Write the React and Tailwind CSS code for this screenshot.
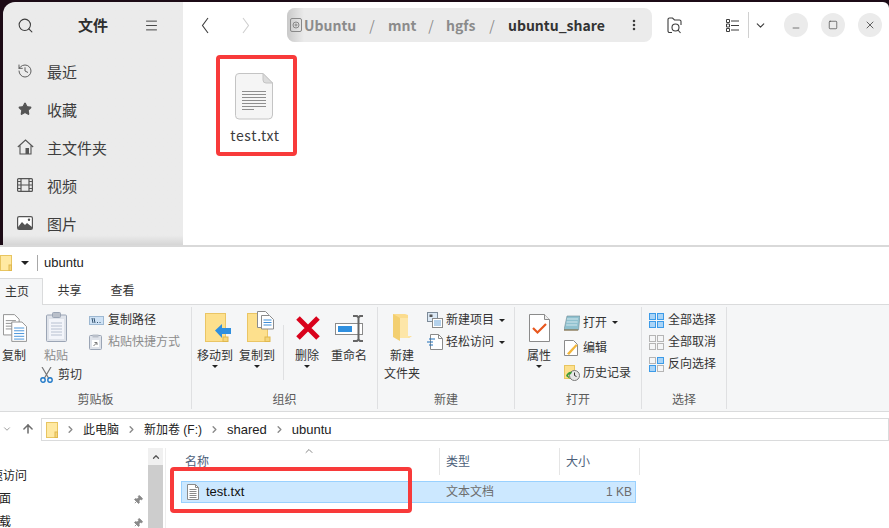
import React from 'react';
import {
  ChevronDown,
  ChevronRight,
  ChevronUp,
  EllipsisVertical,
  History,
  Menu,
  Minus,
  Pin,
  Search,
  Square,
  Star,
  X,
  ArrowUp,
} from 'lucide-react';

const CJK = 'font-["Noto_Sans_CJK_SC","Noto_Sans",sans-serif]';

function BackIcon({ flip, color }) {
  return (
    <svg width="8" height="17" viewBox="0 0 8 17" fill="none" stroke={color} strokeWidth="1.1" className={flip ? 'rotate-180' : ''}>
      <path d="M7 1L1.500 8.500 7 16" />
    </svg>
  );
}

function FolderFindIcon() {
  return (
    <svg width="15" height="17" viewBox="0 0 15 17" fill="none" stroke="#3d3d3d" strokeWidth="1.1">
      <path d="M5 15.500H2.500A1.500 1.500 0 0 1 1 14V2.500A1.500 1.500 0 0 1 2.500 1h3l2 2h5A1.500 1.500 0 0 1 14 4.500V8" />
      <circle cx="8.500" cy="10.500" r="3.500" />
      <path d="M11 13l2.500 3" />
    </svg>
  );
}

function HomeIcon() {
  return (
    <svg width="17" height="16" viewBox="0 0 17 16" fill="none" stroke="#555" strokeWidth="1.1">
      <path d="M.800 8L8.500 1l7.700 7M3 6.500v8.500h11V6.500" />
      <rect x="8.500" y="9" width="3.500" height="6" fill="#555" stroke="none" />
    </svg>
  );
}

function FilmIcon() {
  return (
    <svg width="16" height="14" viewBox="0 0 16 14" fill="none" stroke="#555" strokeWidth="1.2">
      <rect x="0.6" y="0.6" width="14.8" height="12.8" rx="1" />
      <path d="M4 .6v12.8M12 .6v12.8M4 7h8M.6 3.5H4M.6 7H4M.6 10.5H4M12 3.5h3.4M12 7h3.4M12 10.5h3.4" />
    </svg>
  );
}

function PictureIcon() {
  return (
    <svg width="16" height="14" viewBox="0 0 16 14">
      <rect x="0.6" y="0.6" width="14.8" height="12.8" rx="1.5" fill="#fff" stroke="#555" strokeWidth="1.2" />
      <path d="M1 11l4-5 3 3 2-2 5 4v2H1z" fill="#555" />
      <circle cx="12" cy="3.8" r="1.2" fill="#555" />
    </svg>
  );
}

function TextFileLarge() {
  return (
    <svg width="38" height="47" viewBox="0 0 38 47">
      <path d="M4 .5h24l9.500 9.500v32a4 4 0 0 1-4 4H4a3.500 3.500 0 0 1-3.500-3.500V4A3.500 3.500 0 0 1 4 .5z" fill="#f5f5f5" stroke="#c4c4c4" />
      <path d="M28 .5V7a3 3 0 0 0 3 3h6.500z" fill="#dcdcdc" stroke="#c4c4c4" />
      <path d="M7 18.500h24M7 21.500h24M7 24.500h24M7 27.500h24M7 30.500h24M7 33.500h24M7 36.500h12" stroke="#8e8e8e" />
    </svg>
  );
}

function CameraFolder() {
  return (
    <svg width="12" height="18" viewBox="0 0 12 18" fill="none" stroke="#888">
      <rect x="0.5" y="2.500" width="11" height="13" rx="1.500" />
      <circle cx="6" cy="9" r="3" />
      <circle cx="6" cy="9" r="1" />
    </svg>
  );
}

function ListViewIcon() {
  return (
    <svg width="13" height="13" viewBox="0 0 13 13" fill="none" stroke="#3d3d3d">
      <path d="M.5.500h3v3h-3zM.5 5h3v3h-3zM.5 9.500h3v3h-3zM5 2h8M5 6.500h8M5 11h8" />
    </svg>
  );
}

function WinFolder() {
  return (
    <svg width="12" height="16" viewBox="0 0 12 16">
      <rect x="0.5" y="0.500" width="11" height="15" fill="#ffe9a2" stroke="#e8c560" />
      <rect x="9" y="10" width="2.500" height="5.500" fill="#f5d67c" stroke="#e0b84e" />
    </svg>
  );
}

function RowFileIcon() {
  return (
    <svg width="12" height="16" viewBox="0 0 12 16" fill="none" stroke="#8a8a8a">
      <path d="M.500.500h8l3 3v12h-11z" fill="#fff" />
      <path d="M8.500.500v3h3M2.500 5.500h7M2.500 7.500h7M2.500 9.500h7M2.500 11.500h7M2.500 13.500h7" />
    </svg>
  );
}

function CopyIcon() {
  return (
    <svg width="24" height="28" viewBox="0 0 26 30" className="ml-[2px]">
      <path d="M.5.500h12l5 5v17H.5z" fill="#fff" stroke="#8b8b8b" />
      <path d="M3 7h11M3 10h11M3 13h11M3 16h11" stroke="#8b8b8b" />
      <path d="M9.500 8.500h11l5 5v16h-16z" fill="#fff" stroke="#8b8b8b" />
      <path d="M12 15h11M12 18h11M12 21h11M12 24h11M12 27h11" stroke="#3f8fd8" />
    </svg>
  );
}

function PasteIcon() {
  return (
    <svg width="21" height="30" viewBox="0 0 21 30">
      <rect x="0.500" y="3" width="20" height="26.500" rx="1" fill="#dfe3ea" stroke="#9ba5b5" />
      <rect x="3" y="7" width="15" height="20" fill="#f3f5fa" />
      <path d="M5 11h11M5 14h11M5 17h11M5 20h11M5 23h11" stroke="#b7c0d0" />
      <rect x="6.500" y="0.500" width="8" height="5" rx="1" fill="#b9bfc9" stroke="#9ba5b5" />
    </svg>
  );
}

function ScissorsIcon() {
  return (
    <svg width="13" height="16" viewBox="0 0 13 16" fill="none">
      <path d="M2 0l6.500 11M11 0L4.500 11" stroke="#777" strokeWidth="1.200" />
      <circle cx="3" cy="13" r="2.200" stroke="#1f78c8" strokeWidth="1.400" />
      <circle cx="10" cy="13" r="2.200" stroke="#1f78c8" strokeWidth="1.400" />
    </svg>
  );
}

function CopyPathIcon() {
  return (
    <svg width="15" height="9" viewBox="0 0 15 9">
      <rect x="0.500" y="0.500" width="14" height="8" fill="#cfe2f5" stroke="#9db8d2" />
      <path d="M3 2l1 5M5 2l1 5M8 6.500h1M10.500 6.500h1" stroke="#33526e" />
    </svg>
  );
}

function PasteLinkIcon() {
  return (
    <svg width="13" height="16" viewBox="0 0 13 16">
      <rect x="0.500" y="1.500" width="12" height="14" rx="1" fill="#dfe3ea" stroke="#9ba5b5" />
      <rect x="3.500" y="0.500" width="6" height="3" fill="#b9bfc9" />
      <rect x="3" y="6" width="7" height="7" fill="#fff" />
      <path d="M4.500 12l3-3M5.500 8.500h2.500v2.500" stroke="#777" fill="none" />
    </svg>
  );
}

function MoveToIcon() {
  return (
    <svg width="27" height="29" viewBox="0 0 27 29" className="ml-[6px]">
      <rect x="0.500" y="0.500" width="20" height="28" fill="#fde08d" stroke="#eac565" />
      <rect x="18" y="24" width="5" height="4.500" fill="#f5d67c" stroke="#e0b84e" />
      <path d="M10 17.500L17 11v4h9v6h-9v4z" fill="#2f8fdf" />
    </svg>
  );
}

function CopyToIcon() {
  return (
    <svg width="27" height="31" viewBox="0 0 27 31" className="ml-[6px]">
      <rect x="0.500" y="2.500" width="20" height="28" fill="#fde08d" stroke="#eac565" />
      <rect x="18" y="26" width="5" height="4.500" fill="#f5d67c" stroke="#e0b84e" />
      <path d="M10.500.500h8l3 3v13h-11z" fill="#fff" stroke="#8b8b8b" />
      <path d="M14.500 4.500h8l4 4v9.500h-12z" fill="#fff" stroke="#8b8b8b" />
      <path d="M16.500 9h8M16.500 11.500h8M16.500 14h8" stroke="#3f8fd8" />
    </svg>
  );
}

function DeleteIcon() {
  return (
    <svg width="26" height="26" viewBox="0 0 26 26" className="mb-[1px] ml-[2px]">
      <path d="M3 3l20 20M23 3L3 23" stroke="#d9021c" strokeWidth="5" />
    </svg>
  );
}

function RenameIcon() {
  return (
    <svg width="29" height="27" viewBox="0 0 29 27">
      <rect x="0.500" y="8.500" width="27" height="11" fill="#fff" stroke="#8a8a8a" />
      <rect x="3" y="11" width="14" height="6" fill="#2f8fdf" />
      <path d="M18 1h4l1.500 1.500L25 1h3M23.500 2v23M18 26h4l1.500-1.500L25 26h3" stroke="#666" strokeWidth="2" fill="none" />
    </svg>
  );
}

function NewFolderIcon() {
  return (
    <svg width="19" height="28" viewBox="0 0 19 28">
      <path d="M0 0h12v0l3 1v21h4l-3 2H6z" fill="#fbdc8e" />
      <path d="M0 0l7 4v23l-7-4z" fill="#f3cf70" />
      <path d="M7 4h8v18h3l-3 2H7z" fill="#fde6a8" />
    </svg>
  );
}

function NewItemIcon() {
  return (
    <svg width="16" height="16" viewBox="0 0 16 16">
      <rect x="0.500" y="0.500" width="10" height="9" fill="#dce9f5" stroke="#7d8b99" />
      <rect x="2.500" y="2.500" width="3" height="2.500" fill="#555" />
      <rect x="5.500" y="6.500" width="10" height="9" fill="#fff" stroke="#8a8a8a" />
      <path d="M7 9h7M7 11h7M7 13h7" stroke="#6aa4d8" />
    </svg>
  );
}

function EasyAccessIcon() {
  return (
    <svg width="16" height="16" viewBox="0 0 16 16">
      <path d="M3.500.500h8l4 4v11h-12z" fill="#fff" stroke="#8a8a8a" />
      <path d="M11.500.500v4h4" fill="none" stroke="#8a8a8a" />
      <path d="M2 5h6M0 8h6M2 11h4" stroke="#1f6fb8" />
    </svg>
  );
}

function PropertiesIcon() {
  return (
    <svg width="21" height="28" viewBox="0 0 21 28">
      <path d="M.500.500h15l5 5v22H.500z" fill="#fff" stroke="#8b8b8b" />
      <path d="M15.500.500v5h5" fill="#eee" stroke="#8b8b8b" />
      <path d="M4 14l4.500 4.500L17 10" fill="none" stroke="#e8571e" strokeWidth="2.200" />
    </svg>
  );
}

function OpenIcon() {
  return (
    <svg width="16" height="16" viewBox="0 0 16 16">
      <path d="M3 1h13l-1.500 14H0z" fill="#8fc1cf" stroke="#6f8c96" strokeWidth="0.600" />
      <path d="M3 4h11M2.600 7h11M2.200 10h11" stroke="#d4e8ee" />
      <path d="M0 15h14" stroke="#8a6d3b" />
    </svg>
  );
}

function EditIcon() {
  return (
    <svg width="14" height="16" viewBox="0 0 14 16">
      <path d="M.500.500h9l4 4v11H.500z" fill="#fff" stroke="#8b8b8b" />
      <path d="M3 13.500L12 4l1.500 1.500L5 15z" fill="#f3b63c" />
    </svg>
  );
}

function HistoryIcon() {
  return (
    <svg width="16" height="16" viewBox="0 0 16 16">
      <rect x="0.500" y="0.500" width="10" height="13" fill="#fde08d" stroke="#e8c560" />
      <circle cx="10.500" cy="10.500" r="5" fill="#e6e6e6" stroke="#777" />
      <path d="M10.500 7.500v3l2 1" stroke="#333" fill="none" />
      <path d="M2 11a5 5 0 0 1 6-4l-1 2-3 1 2 4z" fill="#3a9b3a" />
    </svg>
  );
}

function SelectGrid({ cells }) {
  return (
    <span className="grid h-[15px] w-[15px] grid-cols-2 gap-px">
      {cells.map((on, i) => (
        <span
          key={i}
          className={on ? 'border border-[#3c9be8] bg-[#a9d4f7]' : 'border border-[#b5b5b5] bg-transparent'}
        />
      ))}
    </span>
  );
}

function Caret({ className = '' }) {
  return <span className={`inline-block h-0 w-0 border-x-[3px] border-t-[3px] border-x-transparent border-t-[#222] ${className}`} />;
}

function NavItem({ icon, label }) {
  return (
    <div className="flex h-[38px] items-center">
      <span className="flex w-[44px] justify-center">{icon}</span>
      <span className="text-[15px] leading-none text-[#3d3d3d]">{label}</span>
    </div>
  );
}

function RibbonGroup({ label, width, children }) {
  return (
    <div className={`my-[2px] flex flex-col border-r border-[#dfe0e2] ${width}`}>
      <div className="flex flex-1">{children}</div>
      <div className="h-[20px] pt-[3px] text-center text-[12px] leading-[16px] text-[#5c5c5c]">{label}</div>
    </div>
  );
}

function LargeButton({ icon, lines, caret, width, grey }) {
  return (
    <div className={`flex flex-col items-center ${width}`}>
      <div className="flex h-[40px] items-end justify-center pb-[5px]">{icon}</div>
      <div className={`text-center text-[12px] leading-[18px] ${grey ? 'text-[#8c8c8c]' : 'text-[#333]'}`}>
        {lines.map((line) => (
          <div key={line}>{line}</div>
        ))}
      </div>
      {caret && <Caret />}
    </div>
  );
}

function SmallButton({ icon, label, caret, grey, iconWidth = 'w-[19px]', height = 'h-[22px]' }) {
  return (
    <div className={`flex items-center ${height}`}>
      <span className={`flex justify-start ${iconWidth}`}>{icon}</span>
      <span className={`whitespace-nowrap text-[12px] ${grey ? 'text-[#8c8c8c]' : 'text-[#333]'}`}>{label}</span>
      {caret && <Caret className="ml-[5px]" />}
    </div>
  );
}

function Crumb({ children, latin }) {
  return (
    <>
      <ChevronRight size={11} strokeWidth={3} className="mx-[7px] text-[#8a8a8a]" />
      <span className={`text-[#222] ${latin ? 'text-[13px]' : 'text-[12px]'}`}>{children}</span>
    </>
  );
}

function UbuntuWindow() {
  return (
    <div className="flex h-[245px] shrink-0 bg-[#1c0b16] pt-[2px] pl-[3px]">
      <aside className="flex w-[180px] flex-col overflow-hidden rounded-tl-xl bg-[#ebebeb] bg-gradient-to-b from-[#ebebeb] from-[96%] to-[#d6d6d6]">
        <div className="flex h-[46px] items-center">
          <Search size={17} strokeWidth={1.5} className="ml-[14px] text-[#3d3d3d]" />
          <span className="ml-[44px] w-[30px] text-[15px] font-bold text-[#2e2e2e]">文件</span>
          <Menu size={15} strokeWidth={1.5} className="ml-[36px] text-[#3d3d3d]" />
        </div>
        <div className="pt-[4px]">
          <NavItem icon={<History size={16} strokeWidth={1.4} className="text-[#555]" />} label="最近" />
          <NavItem icon={<Star size={14} fill="#555" className="text-[#555]" />} label="收藏" />
          <NavItem icon={<HomeIcon />} label="主文件夹" />
          <NavItem icon={<FilmIcon />} label="视频" />
          <NavItem icon={<PictureIcon />} label="图片" />
        </div>
      </aside>
      <main className="flex-1 rounded-tr-md bg-white">
        <div className="flex h-[46px] items-center">
          <span className="ml-[18px]"><BackIcon color="#3d3d3d" /></span>
          <span className="ml-[33px]"><BackIcon flip color="#cfcfcf" /></span>
          <div className="ml-[37px] flex h-[34px] w-[365px] items-center rounded-lg bg-[#ebebeb] text-[14px] font-semibold text-[#8b8b8b]">
            <span className="flex h-full w-[17px] items-center justify-center rounded-l-lg bg-gradient-to-r from-[#c9c9c9] to-[#ebebeb]">
              <CameraFolder />
            </span>
            <span className="w-[52px]">Ubuntu</span>
            <span className="w-[32px] text-center font-normal">/</span>
            <span className="w-[28px]">mnt</span>
            <span className="w-[30px] text-center font-normal">/</span>
            <span className="w-[30px]">hgfs</span>
            <span className="w-[32px] text-center font-normal">/</span>
            <span className="w-[96px] whitespace-nowrap text-[#333]">ubuntu_share</span>
            <EllipsisVertical size={14} strokeWidth={2.4} className="ml-[23px] text-[#3d3d3d]" />
          </div>
          <span className="ml-[15px]"><FolderFindIcon /></span>
          <span className="ml-[44px]"><ListViewIcon /></span>
          <span className="ml-[9px] h-[26px] w-px bg-[#d0d0d0]" />
          <ChevronDown size={13} className="ml-[5px] text-[#3d3d3d]" />
          <span className="ml-[17px] flex h-[24px] w-[24px] items-center justify-center rounded-full bg-[#ebebeb]">
            <Minus size={10} strokeWidth={1.6} className="mt-[5px] text-[#3d3d3d]" />
          </span>
          <span className="ml-[13px] flex h-[24px] w-[24px] items-center justify-center rounded-full bg-[#ebebeb]">
            <Square size={10} strokeWidth={1.6} className="text-[#3d3d3d]" />
          </span>
          <span className="ml-[13px] flex h-[24px] w-[24px] items-center justify-center rounded-full bg-[#ebebeb]">
            <X size={12} strokeWidth={1.6} className="text-[#3d3d3d]" />
          </span>
        </div>
        <div className="mt-[7px] ml-[33px] flex h-[101px] w-[81px] flex-col items-center rounded-[4px] border-[4px] border-[#f83a3a] pt-[14px] pr-[5px]">
          <TextFileLarge />
          <span className="mt-[5px] ml-[2px] whitespace-nowrap text-[14px] leading-[20px] tracking-[0.6px] text-[#3d3d3d]">test.txt</span>
        </div>
      </main>
    </div>
  );
}

function ExplorerWindow() {
  return (
    <div className="relative flex h-[283px] flex-col overflow-hidden border-t-2 border-[#d9d9d9] bg-white font-['Liberation_Sans','Noto_Sans_CJK_SC',sans-serif]">
      <div className="flex h-[30px] shrink-0 items-center pt-[2px]">
        <WinFolder />
        <Caret className="ml-[9px] border-x-[4px] border-t-[4px]" />
        <span className="ml-[8px] h-[16px] w-px bg-[#a8a8a8]" />
        <span className="ml-[6px] text-[13px] text-[#222]">ubuntu</span>
      </div>
      <div className="flex h-[27px] shrink-0 items-end text-[12px] text-[#333]">
        <div className="z-10 -mb-px flex h-[27px] w-[43px] items-center rounded-tr-[1px] border-t border-r border-[#dadbdc] bg-[#f5f6f7] pl-[5px]">主页</div>
        <div className="flex h-[27px] w-[53px] items-center justify-center">共享</div>
        <div className="flex h-[27px] w-[53px] items-center justify-center">查看</div>
      </div>
      <div className="flex h-[108px] shrink-0 border-y border-[#dadbdc] bg-[#f5f6f7]">
        <RibbonGroup label="剪贴板" width="w-[192px]">
          <LargeButton icon={<CopyIcon />} lines={['复制']} width="w-[28px]" />
          <div className="ml-[12px] flex w-[44px] flex-col">
            <LargeButton icon={<PasteIcon />} lines={['粘贴']} width="w-[32px]" grey />
            <SmallButton icon={<ScissorsIcon />} label="剪切" iconWidth="w-[18px]" height="h-[20px]" />
          </div>
          <div className="ml-[5px] pt-[2px]">
            <SmallButton icon={<CopyPathIcon />} label="复制路径" />
            <SmallButton icon={<PasteLinkIcon />} label="粘贴快捷方式" grey />
          </div>
        </RibbonGroup>
        <RibbonGroup label="组织" width="w-[186px]">
          <LargeButton icon={<MoveToIcon />} lines={['移动到']} caret width="w-[46px]" />
          <LargeButton icon={<CopyToIcon />} lines={['复制到']} caret width="w-[38px]" />
          <span className="mt-[18px] ml-[7px] h-[55px] w-px bg-[#dfe0e2]" />
          <LargeButton icon={<DeleteIcon />} lines={['删除']} caret width="w-[26px] ml-[10px]" />
          <LargeButton icon={<RenameIcon />} lines={['重命名']} width="w-[36px] ml-[11px]" />
        </RibbonGroup>
        <RibbonGroup label="新建" width="w-[137px]">
          <LargeButton icon={<NewFolderIcon />} lines={['新建', '文件夹']} width="w-[36px] ml-[6px]" />
          <div className="ml-[7px] pt-[2px]">
            <SmallButton icon={<NewItemIcon />} label="新建项目" caret />
            <SmallButton icon={<EasyAccessIcon />} label="轻松访问" caret />
          </div>
        </RibbonGroup>
        <RibbonGroup label="打开" width="w-[127px]">
          <LargeButton icon={<PropertiesIcon />} lines={['属性']} caret width="w-[24px] ml-[12px]" />
          <div className="ml-[13px] pt-[3px]">
            <SmallButton icon={<OpenIcon />} label="打开" caret height="h-[25px]" />
            <SmallButton icon={<EditIcon />} label="编辑" height="h-[25px]" />
            <SmallButton icon={<HistoryIcon />} label="历史记录" height="h-[25px]" />
          </div>
        </RibbonGroup>
        <RibbonGroup label="选择" width="w-[85px]">
          <div className="ml-[7px] pt-[2px]">
            <SmallButton icon={<SelectGrid cells={[1, 1, 1, 1]} />} label="全部选择" />
            <SmallButton icon={<SelectGrid cells={[0, 0, 0, 0]} />} label="全部取消" />
            <SmallButton icon={<SelectGrid cells={[0, 1, 1, 0]} />} label="反向选择" />
          </div>
        </RibbonGroup>
      </div>
      <div className="flex h-[28px] shrink-0 items-start pt-[6px]">
        <div className="flex h-[22px] w-[41px] items-center">
          <ChevronDown size={10} strokeWidth={2} className="ml-[2px] text-[#8a8a8a]" />
          <ArrowUp size={14} strokeWidth={2.6} className="ml-[9px] text-[#6d6d6d]" />
        </div>
        <div className="flex h-[23px] flex-1 items-center border border-[#dadbdc] pl-[4px]">
          <WinFolder />
          <Crumb>此电脑</Crumb>
          <Crumb>新加卷 (F:)</Crumb>
          <Crumb latin>shared</Crumb>
          <Crumb latin>ubuntu</Crumb>
        </div>
      </div>
      <div className="flex flex-1 pt-[8px]">
        <nav className="w-[148px] overflow-hidden pt-[17px] text-[12px] leading-[23px] text-[#222]">
          <div className="-ml-[21px] whitespace-nowrap">快速访问</div>
          <div className="-ml-[13px] flex items-center whitespace-nowrap">
            桌面<Pin size={10} fill="#8a8a8a" className="ml-[122px] rotate-45 text-[#8a8a8a]" />
          </div>
          <div className="-ml-[13px] flex items-center whitespace-nowrap">
            下载<Pin size={10} fill="#8a8a8a" className="ml-[122px] rotate-45 text-[#8a8a8a]" />
          </div>
        </nav>
        <div className="flex w-[15px] flex-col bg-[#cdcdcd]">
          <div className="flex h-[17px] items-center justify-center bg-[#f0f0f0]">
            <ChevronUp size={10} strokeWidth={3} className="text-[#555]" />
          </div>
        </div>
        <div className="w-[3px] border-r border-[#eeeeee]" />
        <div className="flex-1">
          <div className="relative flex h-[27px] text-[12px] text-[#4c607a]">
            <ChevronUp size={12} className="absolute top-[-3px] left-[137px] text-[#888]" />
            <div className="flex w-[274px] items-end border-r border-[#e5e5e5] pb-[4px] pl-[19px]">名称</div>
            <div className="flex w-[120px] items-end border-r border-[#e5e5e5] pb-[4px] pl-[6px]">类型</div>
            <div className="flex w-[80px] items-end border-r border-[#e5e5e5] pb-[4px] pl-[6px]">大小</div>
          </div>
          <div className="mt-[6px] ml-[15px] flex h-[22px] w-[455px] items-center border border-[#99d1ff] bg-[#cce8ff] text-[12px]">
            <span className="ml-[5px] flex"><RowFileIcon /></span>
            <span className="ml-[7px] w-[240px] text-[13px] text-[#111]">test.txt</span>
            <span className="w-[146px] text-[#6d6d6d]">文本文档</span>
            <span className="w-[40px] text-right text-[#6d6d6d]">1 KB</span>
          </div>
        </div>
      </div>
      <div className="absolute top-[220px] left-[170px] h-[46px] w-[242px] rounded-[4px] border-[4px] border-[#f83a3a]" />
    </div>
  );
}

export default function App() {
  return (
    <div className={`h-[528px] w-[889px] overflow-hidden ${CJK}`}>
      <UbuntuWindow />
      <ExplorerWindow />
    </div>
  );
}
